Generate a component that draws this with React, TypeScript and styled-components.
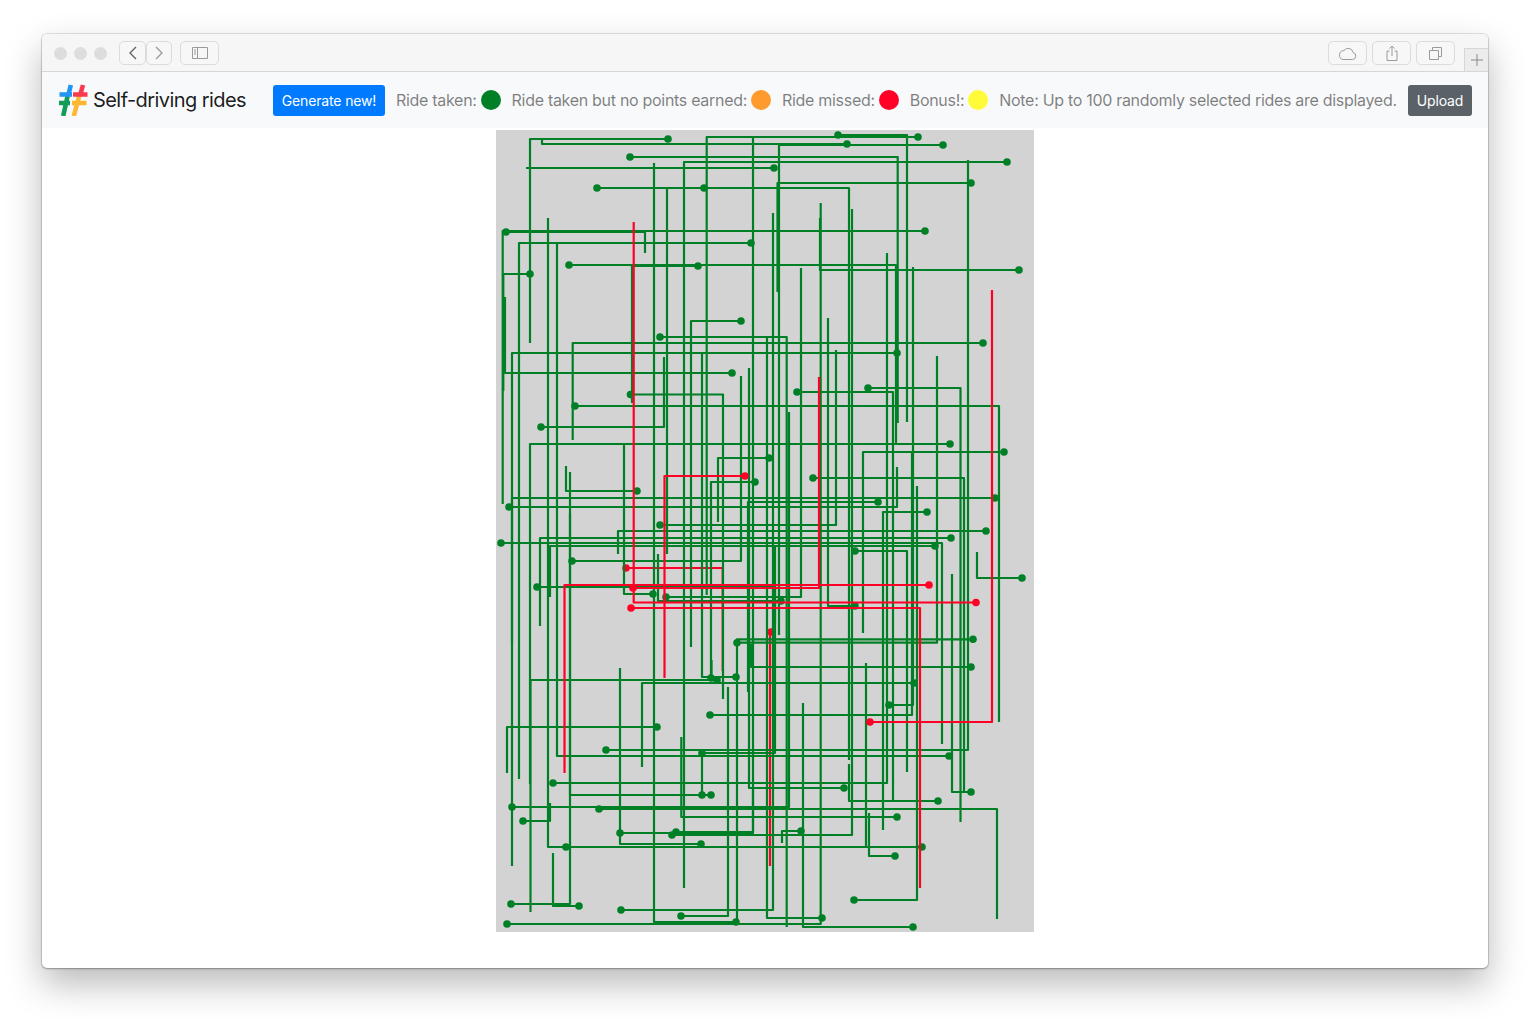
import styled, { createGlobalStyle } from 'styled-components';

const GlobalStyle = createGlobalStyle`
  html, body {
    margin: 0;
    padding: 0;
    background: #fff;
  }
  body {
    font-family: Inter, "Liberation Sans", sans-serif;
  }
`;

const Page = styled.div`
  width: 1530px;
  height: 1019px;
  padding: 34px 42px 0;
  box-sizing: border-box;
  overflow: hidden;
`;

const Browser = styled.div`
  width: 1446px;
  height: 934px;
  display: flex;
  flex-direction: column;
  background: #fff;
  border-radius: 5px;
  overflow: hidden;
  box-shadow: 0 0 0 1px rgba(0, 0, 0, 0.1), 0 1px 2px rgba(0, 0, 0, 0.25), 0 16px 36px rgba(0, 0, 0, 0.28);
`;

const TitleBar = styled.div`
  height: 38px;
  flex: none;
  box-sizing: border-box;
  display: flex;
  align-items: flex-start;
  padding: 7px 0 0 12px;
  background: #f6f6f6;
  border-bottom: 1px solid #d6d6d6;
`;

const Lights = styled.div`
  display: flex;
  gap: 7px;
  margin: 6px 12px 0 0;
`;

const Light = styled.span`
  width: 13px;
  height: 13px;
  border-radius: 50%;
  background: #dddddd;
`;

const ToolButton = styled.button<{ $w: number; $ml?: number }>`
  width: ${(p) => p.$w}px;
  height: 24px;
  margin-left: ${(p) => p.$ml ?? 0}px;
  padding: 0;
  display: flex;
  align-items: center;
  justify-content: center;
  background: #f7f7f7;
  border: 1px solid #dcdcdc;
  border-radius: 5px;
  color: #9a9a9a;
`;

const RightTools = styled.div`
  margin-left: auto;
  display: flex;
  gap: 5px;
`;

const NewTab = styled.div`
  align-self: flex-end;
  width: 24px;
  height: 23px;
  margin-left: 9px;
  margin-right: 0;
  box-sizing: border-box;
  display: flex;
  align-items: center;
  justify-content: center;
  color: #8a8a8a;
  background: #ececec;
  border-top: 1px solid #d6d6d6;
  border-left: 1px solid #d6d6d6;
`;

const Navbar = styled.nav`
  height: 56px;
  flex: none;
  box-sizing: border-box;
  display: flex;
  align-items: center;
  padding: 0 16px;
  background: #f8f9fa;
`;

const Brand = styled.a`
  display: flex;
  align-items: center;
  gap: 5px;
  margin-right: 27px;
  font-size: 20px;
  letter-spacing: -0.57px;
  color: rgba(0, 0, 0, 0.9);
`;

const Btn = styled.button<{ $bg: string; $w: number }>`
  width: ${(p) => p.$w}px;
  height: 31px;
  padding: 0;
  border: 0;
  border-radius: 3px;
  font-family: inherit;
  font-size: 14px;
  letter-spacing: -0.15px;
  color: #fff;
  background: ${(p) => p.$bg};
`;

const LegendText = styled.span<{ $ml: number }>`
  margin-left: ${(p) => p.$ml}px;
  font-size: 16px;
  letter-spacing: -0.3px;
  white-space: nowrap;
  color: rgba(0, 0, 0, 0.5);
`;

const Dot = styled.span<{ $color: string }>`
  width: 20px;
  height: 20px;
  flex: none;
  margin-left: 4px;
  border-radius: 50%;
  background: ${(p) => p.$color};
`;

const UploadSlot = styled.div`
  margin-left: auto;
`;

const Stage = styled.main`
  flex: 1;
  display: flex;
  justify-content: center;
  padding-top: 2px;
`;

const Canvas = styled.svg`
  width: 538px;
  height: 802px;
  display: block;
  background: #d3d3d3;
`;

// dot x, dot y, corner x, end y
type Ride = [number, number, number, number];

// these two sit under the green lines in the picture
const missedUnder: Ride[] = [
  [626, 568, 722.7, 671], [771, 632, 770, 866],
];

const takenRides: Ride[] = [
  [668, 139, 530, 343], [847, 144, 542, 140], [630, 157, 897.7, 423], [774, 168, 526, 168],
  [597, 188, 849, 760], [704, 188, 667, 554], [506, 232, 645, 253], [925, 231, 502.7, 504],
  [751, 243, 519, 779], [569, 265, 896, 445], [698, 266, 632, 403], [630.5, 394.5, 723, 699],
  [1019, 270, 820, 218], [507, 924, 820.7, 203], [822, 918, 767, 338], [660, 337, 786.7, 927],
  [512, 807, 789, 412], [599, 809, 997, 919], [530, 274, 503.3, 391], [566, 847, 866, 663],
  [922, 847, 548, 218], [511, 904, 570, 472], [579, 906, 553, 853], [949, 756, 557, 243],
  [983, 343, 572.7, 440], [897, 353, 512, 866], [732, 373, 505, 297], [736, 922, 654, 163],
  [1007, 162, 684, 888], [918, 137, 706.7, 595], [838, 135, 907, 422], [943, 145, 779, 635],
  [971, 183, 777.5, 292], [621, 910, 773, 213], [741, 321, 691, 647], [541, 427, 664, 357],
  [736, 677, 702, 352], [878, 502, 748, 692], [844, 788, 749, 368], [797, 392, 893, 802],
  [868, 388, 960.5, 822], [1004, 452, 863, 633], [950, 444, 530, 784], [653, 594, 624, 444],
  [813, 478, 964, 792], [971, 792, 952, 574], [509, 507, 897, 467], [927, 512, 883, 830],
  [995, 498, 512, 643], [986, 531, 618, 554], [951, 538, 540, 626], [935, 546, 550, 597],
  [501, 543, 942, 744], [855, 551, 907, 772], [666, 597, 801, 268], [781, 601, 658, 554],
  [855, 606, 828, 318], [660, 525, 836, 350], [737, 642.7, 937, 356], [973, 639.3, 737, 920],
  [971, 667, 751, 644], [914, 683, 642, 767], [717, 680, 530.5, 912], [711, 678, 711.5, 660],
  [755, 482, 711, 678], [769, 458, 718, 522], [575, 406, 999, 722], [637, 491, 566, 466],
  [537, 587, 775, 625], [572, 561, 741, 376], [710, 715, 912, 453], [889, 705, 913, 267],
  [854, 900, 917, 486], [657, 727, 507, 773], [606, 750, 968, 160], [702, 795, 702, 753],
  [702, 753, 775, 545], [711, 795, 570, 514], [553, 783, 887, 253], [523, 821, 550, 803],
  [676, 832, 753, 137], [620, 833, 753, 790], [672, 835, 852, 209], [701, 844, 620, 668],
  [681, 916, 728, 687], [897, 817, 681.3, 737], [801, 831, 782, 843], [913, 927, 803, 703],
  [895, 856, 869, 813], [938, 801, 849, 764], [1022, 578, 977, 552],
];

const missedRides: Ride[] = [
  [976, 602.5, 633.7, 222], [929, 585, 564.5, 773], [633, 588, 819, 377],
  [745, 476, 664.5, 678], [631, 608, 920, 888], [870, 722, 992, 290],
];

const GREEN = '#008026';
const RED = '#ff0026';

const RideLine = ({ ride, color }: { ride: Ride; color: string }) => {
  const [x, y, cx, ey] = ride;
  return (
    <g>
      <path
        d={`M${x} ${y}H${cx}V${ey}`}
        fill="none"
        stroke={color}
        strokeWidth={2.2}
        strokeLinejoin="round"
      />
      <circle cx={x} cy={y} r={3.8} fill={color} />
    </g>
  );
};

const Logo = () => (
  <svg width="30" height="32" viewBox="0 0 30 32">
    <g fill="none" strokeWidth="4.6">
      <path d="M9.6 12 5.2 32M1 19h11" stroke="#0f9d58" />
      <path d="M21.200 12 15.800 32M14 19h14.500" stroke="#fdb733" />
      <path d="M12.800 1 10 12.500M1.500 10.500h12.500" stroke="#2196f3" />
      <path d="M25 1 21.800 12.500M15 10.500h14.500" stroke="#f63b4f" />
    </g>
  </svg>
);

const Icon = styled.svg`
  display: block;
  fill: none;
  stroke: currentColor;
  stroke-width: 1;
`;

const BackIcon = styled(Icon)`
  color: #5f5f5f;
  stroke-width: 1.3;
`;

const ForwardIcon = styled(Icon)`
  stroke-width: 1.3;
`;

export default function App() {
  return (
    <Page>
      <GlobalStyle />
      <Browser>
        <TitleBar>
          <Lights>
            <Light />
            <Light />
            <Light />
          </Lights>
          <ToolButton $w={27}>
            <BackIcon width="10" height="14" viewBox="0 0 10 14">
              <path d="M8 1L2 7l6 6" />
            </BackIcon>
          </ToolButton>
          <ToolButton $w={26}>
            <ForwardIcon width="10" height="14" viewBox="0 0 10 14">
              <path d="M2 1l6 6-6 6" />
            </ForwardIcon>
          </ToolButton>
          <ToolButton $w={39} $ml={8}>
            <Icon width="16" height="12" viewBox="0 0 16 12">
              <path d="M.5.5h15v11H.5zM5.500.5v11M2 3h2M2 5h2M2 7h2" />
            </Icon>
          </ToolButton>
          <RightTools>
            <ToolButton $w={39}>
              <Icon width="19" height="13" viewBox="0 0 19 13">
                <path d="M5 12.500h9.500a3.500 3.500 0 0 0 .6-6.900A5 5 0 0 0 6 3.600 4.500 4.500 0 0 0 5 12.500z" />
              </Icon>
            </ToolButton>
            <ToolButton $w={39}>
              <Icon width="12" height="16" viewBox="0 0 12 16">
                <path d="M3.500 6H1v9.500h10V6H8.500M6 11V1M3.500 3.500L6 1l2.500 2.500" />
              </Icon>
            </ToolButton>
            <ToolButton $w={39}>
              <Icon width="13" height="13" viewBox="0 0 13 13">
                <path d="M.5 3.500h9v9h-9zM3.500 3.500v-3h9v9h-3" />
              </Icon>
            </ToolButton>
          </RightTools>
          <NewTab>
            <Icon width="12" height="12" viewBox="0 0 12 12">
              <path d="M6 0v12M0 6h12" />
            </Icon>
          </NewTab>
        </TitleBar>
        <Navbar>
          <Brand>
            <Logo />
            Self-driving rides
          </Brand>
          <Btn $bg="#007bff" $w={112}>Generate new!</Btn>
          <LegendText $ml={11}>Ride taken:</LegendText>
          <Dot $color={GREEN} />
          <LegendText $ml={11}>Ride taken but no points earned:</LegendText>
          <Dot $color="#ff9a2e" />
          <LegendText $ml={11}>Ride missed:</LegendText>
          <Dot $color={RED} />
          <LegendText $ml={11}>Bonus!:</LegendText>
          <Dot $color="#fffb38" />
          <LegendText $ml={11}>Note: Up to 100 randomly selected rides are displayed.</LegendText>
          <UploadSlot>
            <Btn $bg="#5a6268" $w={64}>Upload</Btn>
          </UploadSlot>
        </Navbar>
        <Stage>
          <Canvas viewBox="496 130 538 802">
            {missedUnder.map((ride, i) => (
              <RideLine key={i} ride={ride} color={RED} />
            ))}
            {takenRides.map((ride, i) => (
              <RideLine key={i} ride={ride} color={GREEN} />
            ))}
            {missedRides.map((ride, i) => (
              <RideLine key={i} ride={ride} color={RED} />
            ))}
          </Canvas>
        </Stage>
      </Browser>
    </Page>
  );
}
